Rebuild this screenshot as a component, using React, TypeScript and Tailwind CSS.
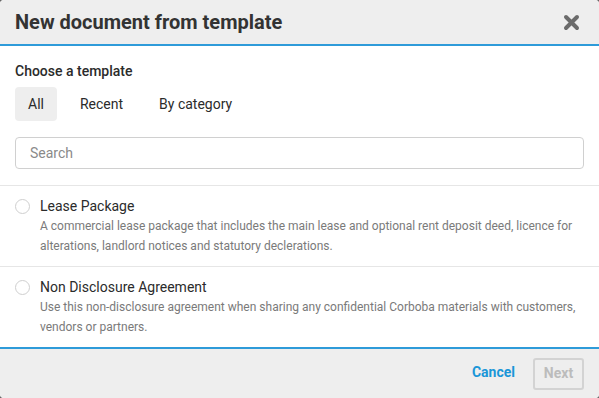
import React from "react";

const font = { fontFamily: "Roboto, 'Liberation Sans', sans-serif" };

function Row({ title, desc }: { title: string; desc: string }) {
  return (
    <div className="flex border-t border-[#e6e6e6] pl-[15px] pr-[15px] pt-[11px] pb-[10px] h-[81px]">
      <div className="w-[25px] shrink-0 pt-[2px]">
        <div className="w-[15px] h-[15px] rounded-full border border-[#cfcfcf] bg-white" />
      </div>
      <div className="flex flex-col">
        <div className="text-[14px] leading-[18px] text-[#2b2b2b]">{title}</div>
        <div className="text-[12px] leading-[20px] text-[#7a7a7a] mt-[1px]">{desc}</div>
      </div>
    </div>
  );
}

export default function App() {
  return (
    <div className="w-[599px] h-[398px] bg-[#666] overflow-hidden" style={font}>
      <div className="w-full h-full bg-white rounded-[4px] overflow-hidden flex flex-col">
        <div className="h-[46px] shrink-0 bg-[#eeeeee] border-b-2 border-[#2e9bd9] flex items-center justify-between pl-[15px] pr-[19px]">
          <div className="text-[20px] font-bold text-[#333] leading-none">New document from template</div>
          <svg width="17" height="17" viewBox="0 0 17 17">
            <path d="M3 3 L14 14 M14 3 L3 14" stroke="#6b6b6b" strokeWidth="4" strokeLinecap="round" />
          </svg>
        </div>
        <div className="px-[15px] pt-[16px]">
          <div className="text-[14px] font-medium text-[#2b2b2b] leading-[18px]">Choose a template</div>
          <div className="flex gap-[10px] mt-[7px]">
            <div className="h-[34px] px-[13px] flex items-center rounded-[4px] bg-[#eeeeee] text-[14px] text-[#2b2b2b]">All</div>
            <div className="h-[34px] px-[13px] flex items-center text-[14px] text-[#2b2b2b]">Recent</div>
            <div className="h-[34px] px-[13px] flex items-center text-[14px] text-[#2b2b2b]">By category</div>
          </div>
          <div className="mt-[16px] h-[32px] border border-[#d0d0d0] rounded-[4px] flex items-center px-[14px] text-[14px] text-[#8a8a8a]">
            Search
          </div>
        </div>
        <div className="mt-[16px] flex flex-col">
          <Row
            title="Lease Package"
            desc="A commercial lease package that includes the main lease and optional rent deposit deed, licence for alterations, landlord notices and statutory declerations."
          />
          <Row
            title="Non Disclosure Agreement"
            desc="Use this non-disclosure agreement when sharing any confidential Corboba materials with customers, vendors or partners."
          />
        </div>
        <div className="flex-1 bg-[#eeeeee] border-t-2 border-[#2e9bd9] flex items-center justify-end pr-[15px] gap-[18px]">
          <div className="text-[14px] font-bold text-[#1a96d8] -mt-[3px]">Cancel</div>
          <div className="h-[32px] w-[51px] border-2 border-[#d3d3d3] rounded-[3px] flex items-center justify-center text-[14px] font-bold text-[#bcbcbc]">
            Next
          </div>
        </div>
      </div>
    </div>
  );
}
